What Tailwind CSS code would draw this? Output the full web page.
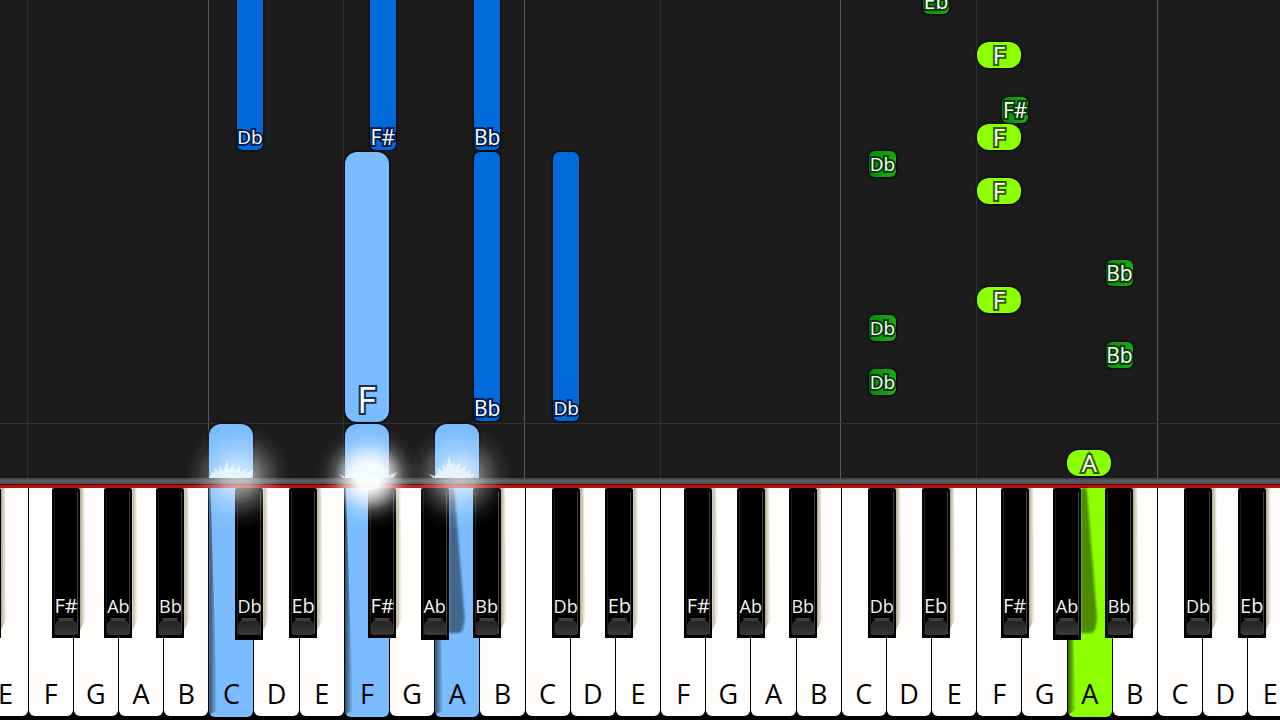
<!DOCTYPE html>
<html lang="en">
<head>
    <meta charset="UTF-8">
    <meta name="viewport" content="width=device-width, initial-scale=1.0">
    <title>Piano Roll</title>
    <script src="https://cdn.jsdelivr.net/npm/@tailwindcss/browser@4"></script>
</head>
<body class="h-screen overflow-hidden bg-black font-['Open_Sans','Noto_Sans',sans-serif]">

    <!-- Stage is a bit wider than the window, so the outer keys are cut off -->
    <main class="relative flex h-full w-[105.87%] -ml-[4.9%] flex-col">

        <!-- Falling notes -->
        <section class="relative flex-1 overflow-hidden bg-[#1c1c1c]">
            <div id="lanes" class="flex h-full"></div>
            <div class="absolute inset-x-0 bottom-[54px] h-px bg-[#333333]"></div>
            <div id="notes" class="absolute inset-0"></div>
        </section>

        <!-- Rail and red felt -->
        <div class="h-[6px] bg-linear-to-b from-[#404040] via-[#5c5c5c] to-[#4a4a4a]"></div>
        <div class="h-px bg-[#3a0808]"></div>
        <div class="h-[3px] bg-[#c00c0c]"></div>

        <!-- Keyboard -->
        <section id="keys" class="flex h-[232px] bg-black"></section>

        <!-- Light on the keys being hit -->
        <div id="glows" class="pointer-events-none absolute inset-0 z-20"></div>
    </main>

    <script>
        const KEY_COUNT = 30;
        const NAMES = ['C', 'D', 'E', 'F', 'G', 'A', 'B'];
        const FLATS = { C: 'Db', D: 'Eb', F: 'F#', G: 'Ab', A: 'Bb' };
        // where a black key starts, as a share of its white key
        const OFFSETS = { C: 0.6, D: 0.79, F: 0.54, G: 0.7, A: 0.85 };
        const PRESSED = { 6: 'blue', 9: 'blue', 11: 'blue', 25: 'green' };

        const nameOf = (i) => NAMES[(i + 1) % 7];
        const percent = (keys) => (keys / KEY_COUNT * 100) + '%';

        // key: white key index, sharp: note of the black key after it
        const notes = [
            { key: 6, sharp: true, top: -40, height: 190, hand: 'left' },
            { key: 9, sharp: true, top: -40, height: 190, hand: 'left' },
            { key: 11, sharp: true, top: -40, height: 190, hand: 'left' },
            { key: 9, top: 152, height: 270, hand: 'left', big: true },
            { key: 11, sharp: true, top: 152, height: 269, hand: 'left' },
            { key: 13, sharp: true, top: 152, height: 269, hand: 'left' },
            { key: 6, top: 424, height: 80, hand: 'left', silent: true },
            { key: 9, top: 424, height: 80, hand: 'left', silent: true },
            { key: 11, top: 424, height: 80, hand: 'left', silent: true },
            { key: 21, sharp: true, top: -12, height: 26, hand: 'right' },
            { key: 23, top: 42, height: 26, hand: 'right' },
            { key: 23, sharp: true, top: 97, height: 26, hand: 'right' },
            { key: 23, top: 124, height: 26, hand: 'right' },
            { key: 20, sharp: true, top: 151, height: 26, hand: 'right' },
            { key: 23, top: 178, height: 26, hand: 'right' },
            { key: 25, sharp: true, top: 260, height: 26, hand: 'right' },
            { key: 23, top: 287, height: 26, hand: 'right' },
            { key: 20, sharp: true, top: 315, height: 26, hand: 'right' },
            { key: 25, sharp: true, top: 342, height: 26, hand: 'right' },
            { key: 20, sharp: true, top: 369, height: 26, hand: 'right' },
            { key: 25, top: 450, height: 26, hand: 'right' },
        ];

        const noteColors = {
            left: 'bg-[#7abcff] rounded-xl [-webkit-text-stroke-color:#12304f]',
            leftSharp: 'bg-[#006adb] rounded-md [-webkit-text-stroke-color:#001c50]',
            right: 'bg-[#8cff00] rounded-xl [-webkit-text-stroke-color:#2f5d00]',
            rightSharp: 'bg-linear-to-r from-[#0c8a0a] to-[#19ac10] rounded-md [-webkit-text-stroke-color:#053c04]',
        };

        function renderLanes() {
            let html = '';
            for (let i = 0; i < KEY_COUNT; i++) {
                const name = nameOf(i);
                const line = name === 'C' ? 'border-l border-[#5c5c5c]'
                    : name === 'F' ? 'border-l border-[#303030]' : '';
                html += `<div class="flex-1 ${line}"></div>`;
            }
            document.getElementById('lanes').innerHTML = html;
        }

        function renderNotes() {
            document.getElementById('notes').innerHTML = notes.map((n) => {
                const name = nameOf(n.key);
                const label = n.silent ? '' : n.sharp ? FLATS[name] : name;
                const left = percent(n.key + (n.sharp ? OFFSETS[name] + 0.03 : 0.02));
                const width = percent(n.sharp ? 0.585 : 0.97);
                const color = noteColors[n.hand + (n.sharp ? 'Sharp' : '')];
                const size = n.big ? 'text-[36px] leading-[44px]'
                    : !n.sharp ? 'text-[24px] leading-[26px]'
                    : label === 'Db' ? 'text-[19px] leading-[26px]' : 'text-[21px] leading-[26px]';
                return `<div class="absolute flex items-end justify-center text-white shadow-[0_0_2px_1px_#05080c] [-webkit-text-stroke-width:4px] [paint-order:stroke_fill] ${color} ${size}"
                    style="left:${left};width:${width};top:${n.top}px;height:${n.height}px"><span>${label}</span></div>`;
            }).join('');
        }

        function renderKeys() {
            let html = '';
            for (let i = 0; i < KEY_COUNT; i++) {
                const name = nameOf(i);
                const press = PRESSED[i];
                const fill = press === 'blue' ? 'h-[229px] pb-[5px] bg-[#7abcff]'
                    : press === 'green' ? 'h-[229px] pb-[5px] bg-[#8cff00]' : 'h-[228px] pb-1 bg-[#fffefc]';

                html += `<div class="relative flex-1">
                    <button class="relative ml-px flex w-[calc(100%-1px)] items-end justify-center overflow-hidden rounded-b-md text-[27px] leading-[36px] text-black ${fill}">
                        ${press ? '<span class="absolute inset-y-0 left-0 w-2 bg-linear-to-r from-black/60 to-transparent [clip-path:polygon(0_0,15%_0,100%_97%,0_99%)]"></span>' : ''}
                        <span>${name}</span>
                    </button>`;

                if (FLATS[name]) {
                    const flat = FLATS[name];
                    const size = flat === 'Eb' || flat === 'F#' ? 'text-[20px]' : 'text-[18px]';
                    const tall = (press && name === 'C') || (PRESSED[i + 1] && name === 'G') ? 'h-[152px] pb-[5px]' : 'h-[150px] pb-[3px]';
                    const shade = PRESSED[i + 1]
                        ? '<span class="absolute top-0 left-full h-[145px] w-4 blur-[1px]"><span class="block h-full bg-black/45 [clip-path:polygon(0_0,35%_0,100%_90%,90%_97%,70%_100%,0_100%)]"></span></span>'
                        : '<span class="absolute top-0 left-full h-[142px] w-[6px] bg-linear-to-r from-[#aaa690] via-[#dedac6] to-[#fffefc] [clip-path:polygon(0_0,70%_0,100%_92%,0_100%)]"></span>';
                    html += `<div class="absolute top-0 z-10 w-[62%]" style="left:${OFFSETS[name] * 100}%">
                        ${shade}
                        <button class="relative flex w-full flex-col items-center justify-end rounded-t-xs bg-black px-[3px] text-[#f2f2f2] ${tall}">
                            <span class="absolute top-1 bottom-1 left-[2px] w-px bg-[#1c1c1c]"></span>
                            <span class="absolute top-1 bottom-1 right-[2px] w-px bg-[#404040]"></span>
                            <span class="relative leading-[24px] whitespace-nowrap ${size}">${flat}</span>
                            <span class="h-[2px] w-4 rounded-b-full bg-[#3c3c3c]"></span>
                            <span class="h-[15px] w-full rounded-t-md rounded-b-xs border-t border-[#404040] bg-linear-to-b from-[#242424] to-[#383838]"></span>
                        </button>
                    </div>`;
                }
                html += '</div>';
            }
            document.getElementById('keys').innerHTML = html;
        }

        function renderGlows() {
            const glows = [
                { at: 6.65, strong: false, flame: 'M0 24 L3 19 L1 17 L6 19 L5 13 L10 18 L11 11 L14 17 L18 7 L20 16 L25 10 L26 17 L31 11 L31 18 L38 14 L37 19 L44 16 L42 24Z' },
                { at: 9.55, strong: true, flame: 'M-6 20 L0 23 L4 16 L6 17 L8 11 L13 13 L16 8 L20 11 L25 7 L29 12 L34 9 L37 15 L42 14 L43 22 L52 18 L48 24 L-2 24Z' },
                { at: 11.55, strong: false, flame: 'M-6 20 L0 22 L3 18 L2 13 L7 17 L8 10 L11 15 L14 2 L17 12 L19 7 L20 14 L25 8 L25 16 L31 11 L30 18 L36 17 L35 21 L40 20 L36 24 L-2 24Z' },
            ];
            document.getElementById('glows').innerHTML = glows.map((g) => {
                const light = g.strong
                    ? 'bg-[radial-gradient(closest-side,white_0%,rgba(255,255,255,0.97)_24%,rgba(255,255,255,0.66)_44%,rgba(255,255,255,0.22)_66%,rgba(255,255,255,0.05)_84%,transparent_100%)]'
                    : 'bg-[radial-gradient(closest-side,rgba(255,255,255,0.66)_0%,rgba(255,255,255,0.52)_28%,rgba(255,255,255,0.26)_52%,rgba(255,255,255,0.07)_78%,transparent_100%)]';
                return `<div class="absolute bottom-[190px] h-[106px] w-[106px] -translate-x-1/2 ${light}" style="left:${percent(g.at)}"></div>
                    <svg class="absolute bottom-[242px] h-6 w-11 overflow-visible" style="left:${percent(Math.floor(g.at) + 0.02)}" viewBox="0 0 44 24">
                        <path d="${g.flame}" fill="#effbff" fill-opacity="0.75"/>
                    </svg>`;
            }).join('');
        }

        renderLanes();
        renderNotes();
        renderKeys();
        renderGlows();
    </script>

</body>
</html>
